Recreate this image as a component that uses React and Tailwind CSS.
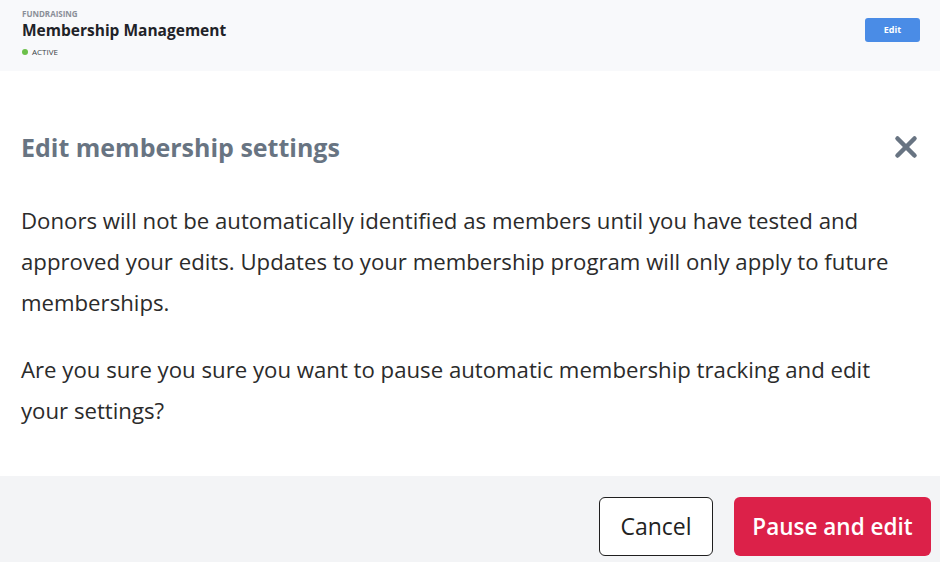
import { X } from "lucide-react";

const font = { fontFamily: '"Open Sans", "Noto Sans", sans-serif' };

export default function App() {
  return (
    <div className="w-[940px] h-[562px] flex flex-col bg-white overflow-hidden" style={font}>
      {/* Page header */}
      <div className="h-[71px] shrink-0 bg-[#f8f9fb] flex items-start justify-between pl-[22px] pr-[20px] pt-[9px]">
        <div className="flex flex-col">
          <span className="text-[8px] leading-[10px] font-bold uppercase text-[#8a8f98]">Fundraising</span>
          <span className="text-[15.5px] leading-[22px] font-bold text-[#1f2328]">Membership Management</span>
          <span className="flex items-center gap-[4px] mt-[6px] text-[8px] leading-[10px] text-[#3a3f46]">
            <span className="w-[6px] h-[6px] rounded-full bg-[#6cc04a]" />
            ACTIVE
          </span>
        </div>
        <button className="mt-[9px] w-[55px] h-[24px] rounded-[3px] bg-[#4a8ce6] text-white text-[9px] font-bold">
          Edit
        </button>
      </div>

      {/* Modal body */}
      <div className="flex-1 flex flex-col pl-[21px] pr-[30px] pt-[58px]">
        <div className="flex items-center justify-between">
          <h2 className="text-[25px] leading-[36px] font-bold text-[#687482]">Edit membership settings</h2>
          <X className="w-[34px] h-[34px] text-[#687482] mr-[-13px]" strokeWidth={3.2} />
        </div>
        <p className="mt-[35px] text-[22.2px] leading-[41px] text-[#2b2b2b]">
          Donors will not be automatically identified as members until you have tested and approved your edits. Updates to your membership program will only apply to future memberships.
        </p>
        <p className="mt-[26px] text-[22.2px] leading-[41px] text-[#2b2b2b]">
          Are you sure you sure you want to pause automatic membership tracking and edit your settings?
        </p>
      </div>

      {/* Footer */}
      <div className="h-[86px] shrink-0 bg-[#f3f4f6] flex items-start justify-end gap-[21px] pt-[21px] pr-[9px]">
        <button className="w-[114px] h-[59px] rounded-[6px] border-[1.5px] border-[#1f1f1f] bg-white text-[23px] font-medium text-[#222]">
          Cancel
        </button>
        <button className="w-[197px] h-[59px] rounded-[6px] bg-[#dc2149] text-white text-[22.5px] font-semibold">
          Pause and edit
        </button>
      </div>
    </div>
  );
}
